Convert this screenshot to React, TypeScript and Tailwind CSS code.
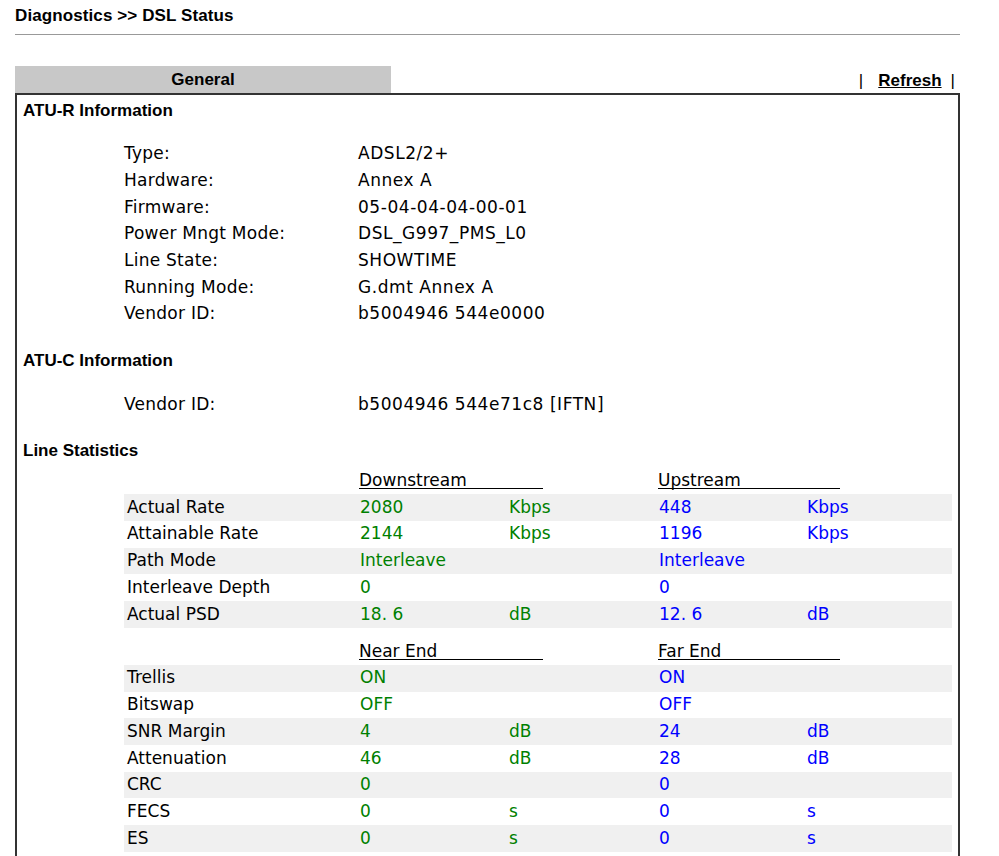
import React from "react";

const G = "text-[#008000]";
const B = "text-[#0000ff]";

type Row = { label: string; dv: string; du?: string; uv: string; uu?: string };

const rows1: Row[] = [
  { label: "Actual Rate", dv: "2080", du: "Kbps", uv: "448", uu: "Kbps" },
  { label: "Attainable Rate", dv: "2144", du: "Kbps", uv: "1196", uu: "Kbps" },
  { label: "Path Mode", dv: "Interleave", uv: "Interleave" },
  { label: "Interleave Depth", dv: "0", uv: "0" },
  { label: "Actual PSD", dv: "18. 6", du: "dB", uv: "12. 6", uu: "dB" },
];

const rows2: Row[] = [
  { label: "Trellis", dv: "ON", uv: "ON" },
  { label: "Bitswap", dv: "OFF", uv: "OFF" },
  { label: "SNR Margin", dv: "4", du: "dB", uv: "24", uu: "dB" },
  { label: "Attenuation", dv: "46", du: "dB", uv: "28", uu: "dB" },
  { label: "CRC", dv: "0", uv: "0" },
  { label: "FECS", dv: "0", du: "s", uv: "0", uu: "s" },
  { label: "ES", dv: "0", du: "s", uv: "0", uu: "s" },
];

const atur: [string, string][] = [
  ["Type:", "ADSL2/2+"],
  ["Hardware:", "Annex A"],
  ["Firmware:", "05-04-04-04-00-01"],
  ["Power Mngt Mode:", "DSL_G997_PMS_L0"],
  ["Line State:", "SHOWTIME"],
  ["Running Mode:", "G.dmt Annex A"],
  ["Vendor ID:", "b5004946 544e0000"],
];

const head = "font-['Liberation_Sans',Arial,sans-serif] font-bold text-[17px] text-black";
const body = "font-['DejaVu_Sans',Verdana,sans-serif] text-[17px] text-black";

function Heading({ children }: { children: React.ReactNode }) {
  return <div className={`${head} h-[30px] flex items-center pl-[6px]`}>{children}</div>;
}

function InfoRow({ label, value }: { label: string; value: string }) {
  return (
    <div className={`${body} h-[26.7px] flex items-center pl-[107px]`}>
      <div className="w-[234px] tracking-[0.25px]">{label}</div>
      <div className="tracking-[0.55px]">{value}</div>
    </div>
  );
}

function StatHeader({ a, b }: { a: string; b: string }) {
  return (
    <div className={`${body} h-[26.7px] flex items-center`}>
      <div className="w-[234px]" />
      <div className="w-[299px] pl-[1px]">
        <span className="inline-block w-[184px] border-b border-black leading-[15px]">{a}</span>
      </div>
      <div className="pl-[1px]">
        <span className="inline-block w-[182px] border-b border-black leading-[15px]">{b}</span>
      </div>
    </div>
  );
}

function StatRow({ r, i }: { r: Row; i: number }) {
  return (
    <div className={`${body} h-[26.7px] flex items-center ${i % 2 === 0 ? "bg-[#f0f0f0]" : "bg-white"}`}>
      <div className="w-[234px] pl-[3px]">{r.label}</div>
      <div className={`w-[149px] pl-[2px] ${G}`}>{r.dv}</div>
      <div className={`w-[150px] pl-[2px] ${G}`}>{r.du ?? ""}</div>
      <div className={`w-[148px] pl-[2px] ${B}`}>{r.uv}</div>
      <div className={`w-[147px] pl-[2px] ${B}`}>{r.uu ?? ""}</div>
    </div>
  );
}

export default function App() {
  return (
    <div className="w-[999px] h-[856px] bg-white overflow-hidden pt-[1px]">
      <div className="pl-[15px] w-[960px]">
        <div className={`${head} h-[30px] flex items-center tracking-[0.1px]`}>Diagnostics &gt;&gt; DSL Status</div>
        <div className="h-px bg-[#999999] mt-[3px]" />
        <div className="flex items-end mt-[31px] h-[27px]">
          <div className={`${head} w-[376px] h-[27px] bg-[#c8c8c8] flex items-center justify-center`}>General</div>
          <div className="flex-1" />
          <div className={`${head} flex items-center h-[27px] pr-[5px] pt-[3px]`}>
            <span className="font-normal">|</span>
            <span className="font-bold underline ml-[15px] mr-[9px]">Refresh</span>
            <span className="font-normal">|</span>
          </div>
        </div>
        <div className="border-t-2 border-x-2 border-[#333333] h-[800px] pt-[1px]">
          <Heading>ATU-R Information</Heading>
          <div className="mt-[14.6px]">
            {atur.map(([l, v]) => (
              <InfoRow key={l} label={l} value={v} />
            ))}
          </div>
          <div className="mt-[18.6px]">
            <Heading>ATU-C Information</Heading>
          </div>
          <div className="mt-[15.6px]">
            <InfoRow label="Vendor ID:" value="b5004946 544e71c8 [IFTN]" />
          </div>
          <div className="mt-[17.6px]">
            <Heading>Line Statistics</Heading>
          </div>
          <div className="ml-[107px] mr-[6px] mt-[1.6px]">
            <StatHeader a="Downstream" b="Upstream" />
            {rows1.map((r, i) => (
              <StatRow key={r.label} r={r} i={i} />
            ))}
            <div className="mt-[10.6px]">
              <StatHeader a="Near End" b="Far End" />
            </div>
            {rows2.map((r, i) => (
              <StatRow key={r.label} r={r} i={i} />
            ))}
          </div>
        </div>
      </div>
    </div>
  );
}
